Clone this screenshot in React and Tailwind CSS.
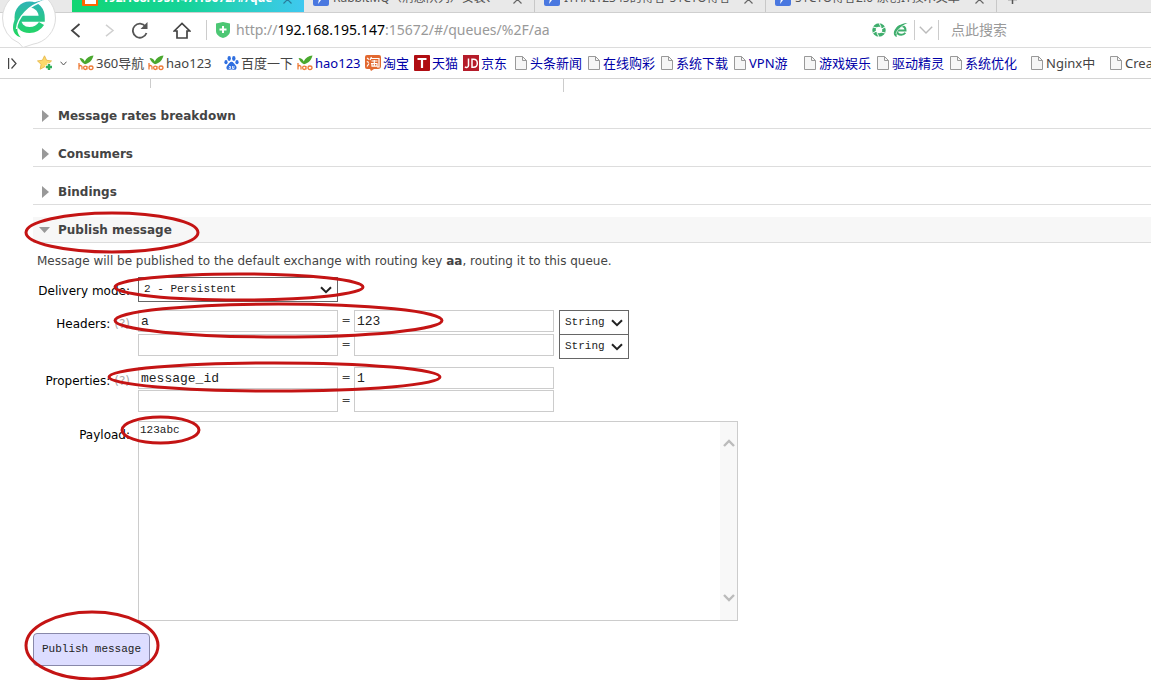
import React from "react";

const Baidu = () => (
  <svg className="h-4 w-[15px] shrink-0" viewBox="0 0 15 16" fill="#2f6fe0">
    <ellipse cx="5.2" cy="3.5" rx="1.7" ry="2.4" />
    <ellipse cx="9.8" cy="3.5" rx="1.7" ry="2.4" />
    <ellipse cx="2" cy="7.2" rx="1.6" ry="2.1" />
    <ellipse cx="13" cy="7.2" rx="1.6" ry="2.1" />
    <path d="M7.5 6.8c1.8 0 2.6 2 4 3.4 1.8 1.8 1.2 4.6-1 4.6-1.200 0-1.800-.3-3-.3s-1.800.3-3 .3c-2.200 0-2.800-2.800-1-4.600 1.400-1.400 2.200-3.400 4-3.400z" />
    <path d="M5 11.500h1.500v2H5.200v-1M8.500 11v2.500H10V11" fill="none" stroke="#fff" strokeWidth=".8" />
  </svg>
);

const Hao = () => (
  <svg className="h-4 w-4 shrink-0" viewBox="0 0 16 16">
    <path d="M1.500 3c3 0 4.500 1.500 5.200 3.500C8.500 3 11.500 1 15.500.6 14.500 5 11.500 8.500 7 9.200 4.500 8.500 3 6 1.500 3z" fill="#4aa82e" />
    <path d="M1 8v6.500M1 11.500c1-1.500 3-1.200 3 .5v2.500M9 11v3.500M9 12.800a1.700 1.700 0 1 0-3.400 0 1.700 1.700 0 0 0 3.400 0M15 12.800a2 1.800 0 1 0-4 0 2 1.800 0 0 0 4 0" fill="none" stroke="#ee7a35" strokeWidth="1.300" />
  </svg>
);

const Page = () => (
  <svg className="h-[14px] w-3 shrink-0" viewBox="0 0 12 14">
    <path d="M.5.5h7l4 4v9H.5z" fill="#f6f6f6" stroke="#999" />
    <path d="M7.500.5v4h4" fill="none" stroke="#999" />
  </svg>
);

const Taobao = () => (
  <svg className="h-4 w-4 shrink-0" viewBox="0 0 16 16">
    <path d="M2 0h12a2 2 0 0 1 2 2v9a3 3 0 0 1-3 3H9l-3 2-1-2H2a2 2 0 0 1-2-2V2a2 2 0 0 1 2-2z" fill="#e2682f" />
    <path d="M2 3l2 1.500M1.800 6.500l2 1M2 11.500l2-3M6.500 2L5 5M6 3.500h8V12h-2M6.500 6h6M6 8.500h6.500M9.300 5v6M7 9v2.200h5V9" fill="none" stroke="#fff" strokeWidth="1.200" />
  </svg>
);

const Tmall = () => (
  <svg className="h-4 w-4 shrink-0" viewBox="0 0 16 16">
    <rect width="16" height="16" rx="1" fill="#b00d12" />
    <path d="M3.500 4h9M8 4v9" stroke="#fff" strokeWidth="2.200" />
  </svg>
);

const Jd = () => (
  <svg className="h-4 w-4 shrink-0" viewBox="0 0 16 16">
    <rect width="16" height="16" fill="#b51c2a" />
    <path d="M5.500 3.500v7a2 2 0 0 1-3.500 1.300M9 4.200v8h1.500c2.500 0 3.800-1.500 3.800-4s-1.300-4-3.800-4z" fill="none" stroke="#fff" strokeWidth="1.500" />
  </svg>
);

const icons = { hao: Hao, baidu: Baidu, page: Page, taobao: Taobao, tmall: Tmall, jd: Jd };

const bookmarks = [
  { icon: "hao", text: "360导航", box: "w-[70px]", tone: "text-[#444]" },
  { icon: "hao", text: "hao123", box: "w-[76px]", tone: "text-[#444]" },
  { icon: "baidu", text: "百度一下", box: "w-[73px]", tone: "text-[#444]" },
  { icon: "hao", text: "hao123", box: "w-[68px]", tone: "text-[#0000a8]" },
  { icon: "taobao", text: "淘宝", box: "w-[49px]", tone: "text-[#0000a8]" },
  { icon: "tmall", text: "天猫", box: "w-[49px]", tone: "text-[#0000a8]" },
  { icon: "jd", text: "京东", box: "w-[52px]", tone: "text-[#0000a8]" },
  { icon: "page", text: "头条新闻", box: "w-[73px]", tone: "text-[#0000a8]" },
  { icon: "page", text: "在线购彩", box: "w-[73px]", tone: "text-[#0000a8]" },
  { icon: "page", text: "系统下载", box: "w-[73px]", tone: "text-[#0000a8]" },
  { icon: "page", text: "VPN游", box: "w-[70px]", tone: "text-[#0000a8]" },
  { icon: "page", text: "游戏娱乐", box: "w-[73px]", tone: "text-[#0000a8]" },
  { icon: "page", text: "驱动精灵", box: "w-[73px]", tone: "text-[#0000a8]" },
  { icon: "page", text: "系统优化", box: "w-[81px]", tone: "text-[#0000a8]" },
  { icon: "page", text: "Nginx中", box: "w-[79px]", tone: "text-[#444]" },
  { icon: "page", text: "Create", box: "w-[70px]", tone: "text-[#444]" },
];

const tabs = ["RabbitMQ（消息队列）安装、", "ITHAI12345的博客-51CTO博客", "51CTO博客2.0-原创IT技术文章"];

function CloseMark({ className }) {
  return (
    <svg className={"h-[9px] w-[9px] shrink-0 " + className} viewBox="0 0 9 9">
      <path d="M.5.5l8 8M8.500.5l-8 8" stroke="currentColor" strokeWidth="1.200" />
    </svg>
  );
}

function TabStrip() {
  return (
    <div className="flex h-[13px] items-end overflow-hidden border-b border-[#cfcfcf] bg-[#e9e9e9] pl-[72px] text-xs leading-4">
      <div className="flex h-6 w-[232px] shrink-0 items-end bg-linear-to-r from-[#12d672] via-[#16d39a] to-[#3fc8f0] pr-3 pl-[10px]">
        <svg className="mb-[6px] h-4 w-4 shrink-0" viewBox="0 0 16 16">
          <rect width="16" height="16" rx="1" fill="#f60" />
          <path d="M3 2h3v5h3V2h3v5h2v7H3z" fill="#fff" />
        </svg>
        <span className="mb-[6px] ml-1 grow overflow-hidden font-bold whitespace-nowrap text-white">192.168.195.147:15672/#/que</span>
        <CloseMark className="mb-2 text-[#2a7d9c]" />
      </div>
      {tabs.map((t) => (
        <div key={t} className="flex h-6 w-[231px] shrink-0 items-end border-r border-[#c8c8c8] pr-3 pl-[9px]">
          <svg className="mb-[6px] h-4 w-4 shrink-0" viewBox="0 0 16 16">
            <rect width="16" height="16" rx="2" fill="#4a78e0" />
            <path d="M5 14l1-5 4-6 2 3-4 4z" fill="#fff" />
          </svg>
          <span className="mr-2 mb-[6px] ml-1 grow overflow-hidden whitespace-nowrap text-[#555]">{t}</span>
          <CloseMark className="mb-2 text-[#666]" />
        </div>
      ))}
      <svg className="mb-2 ml-[11px] h-[9px] w-[9px] shrink-0" viewBox="0 0 9 9">
        <path d="M4.500 0v9M0 4.500h9" stroke="#555" strokeWidth="1.500" />
      </svg>
    </div>
  );
}

function BrowserLogo() {
  return (
    <svg className="absolute top-0 left-0 h-12 w-[58px]" viewBox="0 0 58 48">
      <path d="M2.500 18A26.500 26.500 0 0 1 55.500 18 26.500 26.500 0 0 1 33 44.200L23 47.500l-4-4.500A26.500 26.500 0 0 1 2.500 18z" fill="#fff" stroke="#dcdcdc" />
      <defs>
        <linearGradient id="e" gradientUnits="userSpaceOnUse" x1="0" y1="1" x2="0" y2="34">
          <stop offset="0" stopColor="#2fb3b8" />
          <stop offset="1" stopColor="#22d565" />
        </linearGradient>
      </defs>
      <path d="M20 18.700H41.800C42 9.500 36.500 4.500 29.500 4.500 22 4.500 17.500 10.500 17.500 17.500 17.500 25 22.500 30 29.500 30 35 30 39 27.500 41.500 23.500" fill="none" stroke="url(#e)" strokeWidth="6" />
      <path d="M44 0C29 2 14 13 13 27c-.3 5 2.500 9 8 10.500C17.500 34 16.500 30 18 25 20 16 29 5 44 0z" fill="url(#e)" />
      <path d="M16.500 29C17.500 17 29 5.500 43.500 1" fill="none" stroke="#fff" strokeWidth="1.400" />
    </svg>
  );
}

function AddressBar() {
  return (
    <div className="flex h-[35px] items-center border-b border-[#dcdcdc] bg-white pl-[70px]">
      <button aria-label="Back" className="shrink-0">
        <svg className="h-[15px] w-[11px]" viewBox="0 0 11 15"><path d="M9.500 1L2 7.500 9.500 14" fill="none" stroke="#444" strokeWidth="1.800" /></svg>
      </button>
      <button aria-label="Forward" className="ml-6 shrink-0">
        <svg className="h-[13px] w-[10px]" viewBox="0 0 10 13"><path d="M1 .8l7 5.700-7 5.700" fill="none" stroke="#d0d0d0" strokeWidth="1.500" /></svg>
      </button>
      <button aria-label="Reload" className="ml-4 shrink-0">
        <svg className="h-[17px] w-[18px]" viewBox="0 0 18 17">
          <path d="M14.500 4.500A7 7 0 1 0 15.500 11" fill="none" stroke="#555" strokeWidth="1.800" />
          <path d="M16.500 0v7h-7z" fill="#555" />
        </svg>
      </button>
      <button aria-label="Home" className="ml-6 shrink-0">
        <svg className="h-[17px] w-[18px]" viewBox="0 0 18 17">
          <path d="M1.200 9L9 1.500 16.800 9H14v7H4V9z" fill="none" stroke="#444" strokeWidth="1.700" />
        </svg>
      </button>
      <span className="ml-[15px] h-5 w-px shrink-0 bg-[#ccc]" />
      <svg className="ml-[9px] h-4 w-[14px] shrink-0" viewBox="0 0 14 16">
        <path d="M7 0l7 1.500V9c0 3.500-3 5.800-7 7-4-1.200-7-3.500-7-7V1.500z" fill="#4cc774" />
        <path d="M7 4v7M3.500 7.500h7" stroke="#fff" strokeWidth="2" />
      </svg>
      <a href="#queues" className="ml-[6px] grow text-sm whitespace-nowrap text-[#999]">
        http://<span className="text-black">192.168.195.147</span>:15672/#/queues/%2F/aa
      </a>
      <svg className="h-[14px] w-[14px] shrink-0" viewBox="0 0 14 14" fill="none">
        <circle cx="7" cy="7" r="5" stroke="#3fae6d" strokeWidth="3.500" />
        <path d="M7 0l2 4M13 4l-3.500 2M13 10l-4-1M7 14l-2-4M1 10l3.500-2M1 4l4 1" stroke="#fff" />
      </svg>
      <svg className="ml-[7px] h-[14px] w-[15px] shrink-0" viewBox="0 0 15 14">
        <path d="M4 7.500h8.500C12.500 4.500 11 3 8.500 3 5.500 3 4 5 4 7.500s1.500 4.300 4.300 4.300c2 0 3.200-.8 4-2" fill="none" stroke="#3fae6d" strokeWidth="2" />
        <path d="M14.500 0C7 .5 1 5 .8 10c0 2 1 3.500 3 4C2.500 9 8 3 14.500 0z" fill="#3fae6d" />
        <path d="M3 11C4 6.500 8.500 3 13.500 1.200" stroke="#fff" fill="none" strokeWidth=".7" />
      </svg>
      <span className="ml-[6px] h-5 w-px shrink-0 bg-[#ccc]" />
      <button aria-label="History" className="ml-1 shrink-0">
        <svg className="h-2 w-[14px]" viewBox="0 0 14 8"><path d="M.8.8L7 7 13.200.8" fill="none" stroke="#bbb" strokeWidth="1.400" /></svg>
      </button>
      <span className="ml-[5px] h-5 w-px shrink-0 bg-[#ccc]" />
      <input aria-label="Search" placeholder="点此搜索" className="ml-3 w-[200px] shrink-0 text-sm outline-none placeholder:text-[#999]" />
    </div>
  );
}

function Bookmarks() {
  return (
    <nav className="flex h-[31px] items-center overflow-hidden border-b border-[#d4d4d4] pl-2 text-[13px] leading-5">
      <svg className="h-[11px] w-[9px] shrink-0" viewBox="0 0 9 11"><path d="M.6 0v11M3.500.5L8 5.500l-4.500 5" fill="none" stroke="#444" strokeWidth="1.200" /></svg>
      <svg className="ml-5 h-4 w-4 shrink-0" viewBox="0 0 16 16">
        <path d="M7.500.8l2.100 4.500 4.900.6-3.600 3.400.9 4.900-4.300-2.400-4.300 2.400.9-4.900L.5 5.900l4.900-.6z" fill="#fbd96a" stroke="#e8b84c" strokeWidth=".9" />
        <path d="M12 8.500v7M8.500 12h7" stroke="#fff" strokeWidth="4" />
        <path d="M12 9v6M9 12h6" stroke="#2fae5c" strokeWidth="2.400" />
      </svg>
      <svg className="mr-[11px] ml-[7px] h-[5px] w-[7px] shrink-0" viewBox="0 0 7 5"><path d="M.5.7L3.500 4 6.500.7" fill="none" stroke="#555" /></svg>
      {bookmarks.map((b, i) => {
        const Icon = icons[b.icon];
        return (
          <a key={i} href="#bookmark" className={"flex shrink-0 items-center whitespace-nowrap " + (b.icon === "page" ? "gap-[3px] " : "gap-[2px] ") + b.box + " " + b.tone}>
            <Icon />
            {b.text}
          </a>
        );
      })}
    </nav>
  );
}

function Section({ title, open }) {
  return (
    <h2 className={"mb-3 ml-[33px] flex h-[26px] items-center border-b border-[#ddd] text-xs font-bold text-[#444] " + (open ? "bg-[#f7f7f7]" : "")}>
      <button className="flex items-center">
        <span className="flex w-[25px] pl-[6px]">
          {open ? (
            <svg className="h-[6px] w-[11px]" viewBox="0 0 11 6"><path d="M0 0h11L5.500 6z" fill="#999" /></svg>
          ) : (
            <svg className="ml-[3px] h-3 w-[7px]" viewBox="0 0 7 12"><path d="M0 0l7 6-7 6z" fill="#999" /></svg>
          )}
        </span>
        {title}
      </button>
    </h2>
  );
}

function Select({ id, label, options, className }) {
  return (
    <span className="grid shrink-0 items-center">
      <select id={id} aria-label={label} className={"col-start-1 row-start-1 appearance-none border border-[#666] bg-white px-[5px] font-['Liberation_Mono',monospace] text-[11px] text-[#222] " + className}>
        {options.map((o) => <option key={o}>{o}</option>)}
      </select>
      <svg className="pointer-events-none col-start-1 row-start-1 mr-[6px] h-2 w-3 justify-self-end" viewBox="0 0 12 8"><path d="M1 1.200l5 5 5-5" fill="none" stroke="#222" strokeWidth="2" /></svg>
    </span>
  );
}

function Pair({ id, name, value }) {
  const box = "h-[22px] w-[200px] border border-[#ccc] px-[2px] font-['Liberation_Mono',monospace] text-[13px] text-[#222]";
  return (
    <span className="flex items-center">
      <input id={id} aria-label={id + " name"} defaultValue={name} className={box} />
      <span className="w-4 text-center text-[11px] leading-4 text-[#444]">=</span>
      <input aria-label={id + " value"} defaultValue={value} className={box} />
    </span>
  );
}

const labelBox = "flex w-[97px] shrink-0 justify-end gap-1 pt-[5px] text-xs leading-[18px] whitespace-nowrap text-black";

function Ring({ className }) {
  return (
    <svg className={"pointer-events-none absolute overflow-visible " + className}>
      <ellipse cx="50%" cy="50%" rx="50%" ry="50%" fill="none" stroke="#c41414" strokeWidth="3" />
    </svg>
  );
}

function PublishForm() {
  return (
    <form className="-mt-[2px] pl-[33px]" onSubmit={(e) => e.preventDefault()}>
      <p className="pl-1 text-xs leading-4 text-[#444]">
        Message will be published to the default exchange with routing key <b>aa</b>, routing it to this queue.
      </p>
      <div className="mt-2 flex gap-2">
        <label htmlFor="mode" className={labelBox}>Delivery mode:</label>
        <Select id="mode" options={["2 - Persistent", "1 - Non-persistent"]} className="h-[25px] w-[200px]" />
      </div>
      <div className="mt-2 flex gap-2">
        <div className={labelBox}>
          <label htmlFor="header">Headers:</label><a href="#help" className="text-[#aaa]">(?)</a>
        </div>
        <div>
          <div className="flex h-6 items-start gap-[5px]"><Pair id="header" name="a" value="123" /><Select label="Header type" options={["String", "Number"]} className="h-[25px] w-[70px]" /></div>
          <div className="flex h-[25px] items-start gap-[5px]"><Pair id="header2" /><Select label="Second header type" options={["String", "Number"]} className="h-[25px] w-[70px]" /></div>
        </div>
      </div>
      <div className="mt-2 flex gap-2">
        <div className={labelBox}>
          <label htmlFor="property">Properties:</label><a href="#help" className="text-[#aaa]">(?)</a>
        </div>
        <div className="grid gap-px">
          <Pair id="property" name="message_id" value="1" />
          <Pair id="property2" />
        </div>
      </div>
      <div className="mt-[9px] flex gap-2">
        <label htmlFor="payload" className={labelBox}>Payload:</label>
        <div className="flex h-[200px] w-[600px] border border-[#ccc]">
          <textarea id="payload" defaultValue="123abc" className="grow resize-none px-px py-px font-['Liberation_Mono',monospace] text-[11px] leading-[14px] text-[#222] outline-none" />
          <div className="flex w-[17px] flex-col items-center justify-between bg-[#f8f8f8] pt-[17px] pb-[18px]">
            <svg className="h-2 w-3" viewBox="0 0 12 8"><path d="M1 7l5-5 5 5" fill="none" stroke="#bbb" strokeWidth="2.400" /></svg>
            <svg className="h-2 w-3" viewBox="0 0 12 8"><path d="M1 1l5 5 5-5" fill="none" stroke="#bbb" strokeWidth="2.400" /></svg>
          </div>
        </div>
      </div>
      <button type="submit" className="mt-3 h-[33px] rounded-[4px] border border-[#88a] bg-[#ddf] px-2 font-['Liberation_Mono',monospace] text-[11px] text-[#222]">Publish message</button>
    </form>
  );
}

export default function App() {
  return (
    <div className="relative min-h-screen overflow-hidden bg-white font-['Noto_Sans','Noto_Sans_CJK_SC',sans-serif]">
      <TabStrip />
      <AddressBar />
      <BrowserLogo />
      <Bookmarks />
      <main className="font-['DejaVu_Sans',sans-serif]">
        <div className="mb-[11px] ml-[150px] h-[13px] w-[414px]">
          <div className="flex justify-between">
            <span className="h-[9px] w-px bg-[#ccc]" />
            <span className="h-[13px] w-px bg-[#ccc]" />
          </div>
        </div>
        <Section title="Message rates breakdown" />
        <Section title="Consumers" />
        <Section title="Bindings" />
        <Section title="Publish message" open />
        <PublishForm />
      </main>
      <Ring className="top-[213px] left-[26px] h-[39px] w-[172px]" />
      <Ring className="top-[274px] left-[115px] h-[26px] w-[248px]" />
      <Ring className="top-[304px] left-[115px] h-[33px] w-[327px]" />
      <Ring className="top-[363px] left-[109px] h-[28px] w-[331px]" />
      <Ring className="top-[417px] left-[122px] h-[26px] w-[77px]" />
      <Ring className="top-[612px] left-[26px] h-[67px] w-[132px]" />
    </div>
  );
}
